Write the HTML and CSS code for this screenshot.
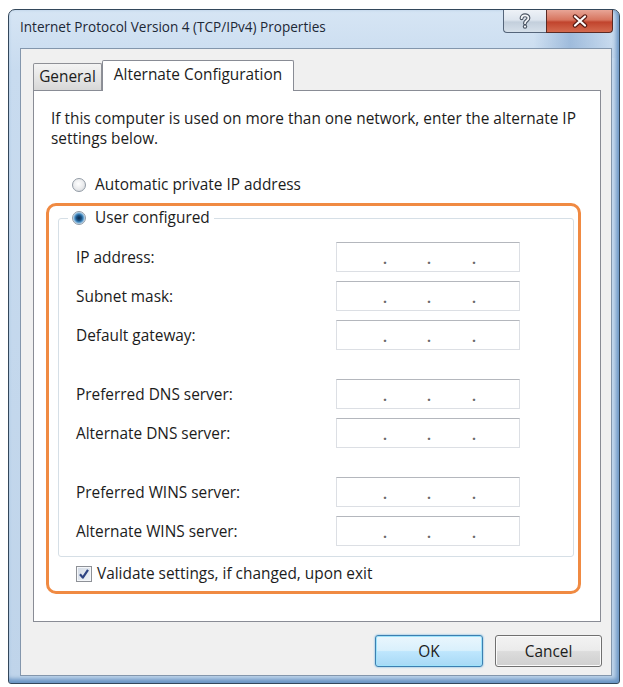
FILE: index.html
```html
<!DOCTYPE html>
<html lang="en">
<head>
<meta charset="utf-8">
<title>Internet Protocol Version 4 (TCP/IPv4) Properties</title>
<link rel="stylesheet" href="styles.css">
</head>
<body>
<div class="window">
  <div class="titlebar">
    <span class="title">Internet Protocol Version 4 (TCP/IPv4) Properties</span>
    <div class="caption">
      <div class="cap-btn cap-help">
        <svg width="12" height="16" viewBox="0 0 12 16">
          <path d="M2.6 5.2 C2.6 1.4 9.4 1.4 9.4 5 C9.4 7.6 6 7.6 6 10.2" fill="none" stroke="#4a5563" stroke-width="4" stroke-linecap="round"/>
          <circle cx="6" cy="13.6" r="2.2" fill="#4a5563"/>
          <path d="M2.6 5.2 C2.6 1.4 9.4 1.4 9.4 5 C9.4 7.6 6 7.6 6 10.2" fill="none" stroke="#f4f6f9" stroke-width="1.8" stroke-linecap="round"/>
          <circle cx="6" cy="13.6" r="1.1" fill="#f4f6f9"/>
        </svg>
      </div>
      <div class="cap-btn cap-close">
        <svg width="16" height="14" viewBox="0 0 16 14">
          <path d="M3 2.5 L13 11.5 M13 2.5 L3 11.5" stroke="#5a1d16" stroke-width="4.4" stroke-linecap="round"/>
          <path d="M3 2.5 L13 11.5 M13 2.5 L3 11.5" stroke="#ffffff" stroke-width="2.2" stroke-linecap="round"/>
        </svg>
      </div>
    </div>
  </div>
  <div class="client">
    <div class="tabs">
      <div class="tab">General</div>
      <div class="tab tab-active">Alternate Configuration</div>
    </div>
    <div class="panel">
      <p class="desc">If this computer is used on more than one network, enter the alternate IP<br>settings below.</p>
      <div class="option option-auto"><span class="radio"></span><span>Automatic private IP address</span></div>
      <div class="highlight">
        <fieldset class="group">
          <legend class="option legend"><span class="radio radio-on"></span><span>User configured</span></legend>
          <div class="rows">
            <div class="rowset">
              <div class="row"><span class="lbl">IP address:</span><span class="ipbox"><span class="seg s1"></span><span class="dot">.</span><span class="seg s2"></span><span class="dot">.</span><span class="seg s3"></span><span class="dot">.</span><span class="seg s4"></span></span></div>
              <div class="row"><span class="lbl">Subnet mask:</span><span class="ipbox"><span class="seg s1"></span><span class="dot">.</span><span class="seg s2"></span><span class="dot">.</span><span class="seg s3"></span><span class="dot">.</span><span class="seg s4"></span></span></div>
              <div class="row"><span class="lbl">Default gateway:</span><span class="ipbox"><span class="seg s1"></span><span class="dot">.</span><span class="seg s2"></span><span class="dot">.</span><span class="seg s3"></span><span class="dot">.</span><span class="seg s4"></span></span></div>
            </div>
            <div class="rowset">
              <div class="row"><span class="lbl">Preferred DNS server:</span><span class="ipbox"><span class="seg s1"></span><span class="dot">.</span><span class="seg s2"></span><span class="dot">.</span><span class="seg s3"></span><span class="dot">.</span><span class="seg s4"></span></span></div>
              <div class="row"><span class="lbl">Alternate DNS server:</span><span class="ipbox"><span class="seg s1"></span><span class="dot">.</span><span class="seg s2"></span><span class="dot">.</span><span class="seg s3"></span><span class="dot">.</span><span class="seg s4"></span></span></div>
            </div>
            <div class="rowset">
              <div class="row"><span class="lbl">Preferred WINS server:</span><span class="ipbox"><span class="seg s1"></span><span class="dot">.</span><span class="seg s2"></span><span class="dot">.</span><span class="seg s3"></span><span class="dot">.</span><span class="seg s4"></span></span></div>
              <div class="row"><span class="lbl">Alternate WINS server:</span><span class="ipbox"><span class="seg s1"></span><span class="dot">.</span><span class="seg s2"></span><span class="dot">.</span><span class="seg s3"></span><span class="dot">.</span><span class="seg s4"></span></span></div>
            </div>
          </div>
        </fieldset>
        <div class="option check-row">
          <span class="checkbox">
            <svg width="12" height="12" viewBox="0 0 12 12"><path d="M2 6.2 L4.8 9.6 L10 1.8" fill="none" stroke="#2d4383" stroke-width="2.2" stroke-linejoin="round"/></svg>
          </span>
          <span>Validate settings, if changed, upon exit</span>
        </div>
      </div>
    </div>
    <div class="buttons">
      <button class="btn btn-default" type="button">OK</button>
      <button class="btn" type="button">Cancel</button>
    </div>
  </div>
</div>
</body>
</html>
```

FILE: styles.css
```css
html, body {
  margin: 0;
  padding: 0;
  background: #ffffff;
}

body {
  font-family: "Open Sans", "Noto Sans", "DejaVu Sans", sans-serif;
  font-size: 15.4px;
  color: #1c1c1c;
}

.window {
  box-sizing: border-box;
  width: 612px;
  height: 675px;
  margin: 9px 0 0 8px;
  border: 1px solid #33475b;
  border-radius: 7px 7px 3px 3px;
  background:
    linear-gradient(to right, rgba(255,255,255,0) 0, rgba(255,255,255,0) 86%, rgba(70,120,180,0.35) 92%, rgba(255,255,255,0) 100%) top / 100% 48px no-repeat,
    linear-gradient(to bottom, #d6e5f4 0, #c8dbef 60px, #bfd4ea 100%);
  box-shadow: inset -5px 0 4px -2px #6d97c6, inset 0 -6px 4px -2px #6a95c4;
  display: flex;
  flex-direction: column;
}

.titlebar {
  display: flex;
  justify-content: space-between;
  align-items: flex-start;
  height: 38px;
  padding-left: 11px;
}

.title {
  margin-top: 7px;
  line-height: 20px;
  font-size: 13.55px;
  color: #1d2836;
  white-space: nowrap;
}

.caption {
  display: flex;
  margin-right: 6px;
}

.cap-btn {
  box-sizing: border-box;
  height: 23px;
  display: flex;
  align-items: center;
  justify-content: center;
  border: 1px solid #55657a;
  border-top: none;
}

.cap-help {
  width: 43px;
  border-radius: 0 0 0 4px;
  border-right: none;
  background: linear-gradient(to bottom, #eef2f7 0, #dde5ee 45%, #c3cfdc 55%, #d6e0ea 100%);
}

.cap-close {
  width: 67px;
  border-radius: 0 0 4px 0;
  border-color: #5a2a24;
  background: linear-gradient(to bottom, #e8a596 0, #d7755f 45%, #c1442d 55%, #d46a4f 100%);
}

.client {
  box-sizing: border-box;
  flex: 1;
  margin: 0 7px 7px 11px;
  border: 1px solid #8396ac;
  background: #f0f0f0;
  padding: 11px 9px 0 12px;
  display: flex;
  flex-direction: column;
}

.tabs {
  display: flex;
  align-items: flex-end;
  height: 31px;
  margin-bottom: -1px;
  position: relative;
  z-index: 1;
}

.tab {
  box-sizing: border-box;
  height: 27px;
  width: 69px;
  margin-bottom: 1px;
  border: 1px solid #8e9096;
  border-bottom: none;
  border-radius: 2px 2px 0 0;
  background: linear-gradient(to bottom, #f4f4f4 0, #e6e6e6 50%, #d7d7d7 100%);
  text-align: center;
  line-height: 26px;
  white-space: nowrap;
}

.tab-active {
  height: 31px;
  width: 192px;
  margin-bottom: 0;
  background: #ffffff;
  line-height: 28px;
  border-color: #898c95;
}

.panel {
  box-sizing: border-box;
  height: 532px;
  margin-right: 1px;
  border: 1px solid #898c95;
  background: #ffffff;
  padding-top: 18px;
}

.desc {
  margin: 0;
  padding-left: 17px;
  line-height: 20px;
  white-space: nowrap;
}

.option {
  display: flex;
  align-items: center;
  line-height: 20px;
  white-space: nowrap;
}

.option-auto {
  margin: 26px 0 0 38px;
  gap: 9px;
}

.radio {
  box-sizing: border-box;
  flex: none;
  width: 14px;
  height: 14px;
  border-radius: 50%;
  border: 1px solid #929ba5;
  background: radial-gradient(circle at 45% 40%, #ffffff 0, #e9eaec 55%, #c9ced4 100%);
}

.radio-on {
  background: radial-gradient(circle at 50% 50%, #0c2a4a 0, #1b4f80 2.5px, #3f86bd 4px, #a8cbe6 5.5px, #e6edf3 6.5px);
}

.highlight {
  box-sizing: border-box;
  width: 535px;
  height: 391px;
  margin: 8px 0 0 12px;
  border: 3px solid #f08a42;
  border-radius: 10px;
  padding: 2px 4px 0 9px;
}

.group {
  margin: 0;
  padding: 0 0 10px 0;
  min-width: 0;
  border: 1px solid #d6dfe6;
  border-radius: 3px;
}

.legend {
  margin-left: 9px;
  padding: 0 4px;
  gap: 9px;
}

.rows {
  margin: 14px 0 0 17px;
  display: flex;
  flex-direction: column;
  gap: 29px;
}

.rowset {
  display: flex;
  flex-direction: column;
  gap: 9px;
}

.row {
  display: flex;
  align-items: center;
  height: 30px;
}

.lbl {
  width: 260px;
  flex: none;
  white-space: nowrap;
}

.ipbox {
  box-sizing: border-box;
  width: 184px;
  height: 30px;
  display: flex;
  border: 1px solid #dcdfe4;
  border-top-color: #b4b7bd;
  background: #ffffff;
  color: #6a6a6a;
  line-height: 32px;
  font-size: 14px;
}

.seg { flex: none; }
.s1 { width: 46px; }
.s2 { width: 40px; }
.s3 { width: 41px; }
.s4 { flex: 1; }

.dot {
  width: 4px;
  text-align: center;
  font-weight: bold;
}

.check-row {
  margin: 7px 0 0 18px;
  gap: 5px;
}

.checkbox {
  box-sizing: border-box;
  width: 16px;
  height: 16px;
  flex: none;
  border: 1px solid #8e9197;
  background: linear-gradient(135deg, #d3dbe6 0, #eef2f7 100%);
  box-shadow: inset 0 0 0 1px #f5f7fa;
  display: flex;
  align-items: center;
  justify-content: center;
}

.buttons {
  display: flex;
  justify-content: flex-end;
  gap: 12px;
  margin-top: 13px;
}

.btn {
  box-sizing: border-box;
  height: 32px;
  width: 107px;
  padding: 0;
  font-family: inherit;
  font-size: 15.4px;
  color: #1c1c1c;
  border: 1px solid #707070;
  border-radius: 3px;
  background: linear-gradient(to bottom, #f3f3f3 0, #ebebeb 48%, #dcdcdc 52%, #cfcfcf 100%);
  box-shadow: inset 0 0 0 1px #fbfbfb;
}

.btn-default {
  width: 108px;
  border-color: #3c7fb1;
  background: linear-gradient(to bottom, #eaf6fd 0, #d9f0fc 48%, #bee6fd 52%, #a7d9f5 100%);
  box-shadow: inset 0 0 0 1px #9fe3fb, 0 0 2px #48a5dc;
}
```
